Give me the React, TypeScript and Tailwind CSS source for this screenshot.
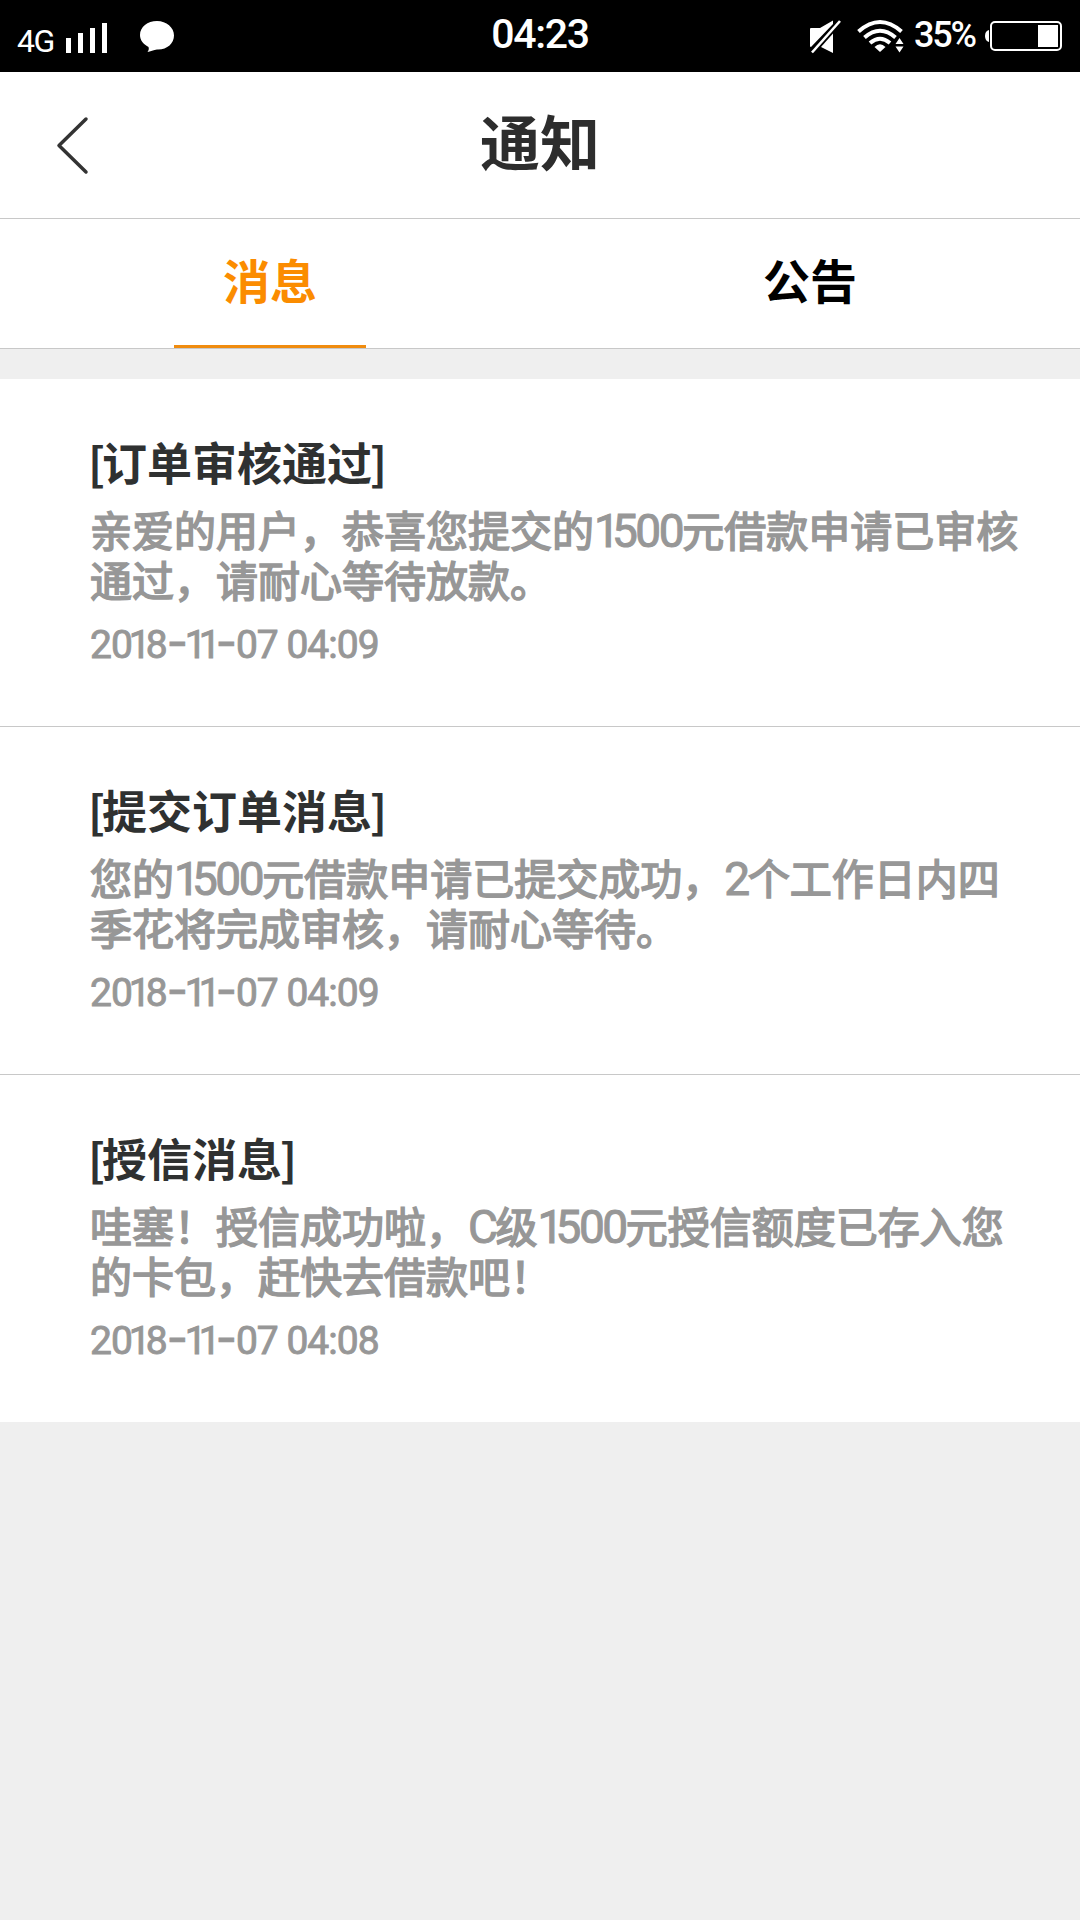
interface Notice {
  title: string;
  lines: string[];
  time: string;
}

const notices: Notice[] = [
  {
    title: '订单审核通过',
    lines: ['亲爱的用户，恭喜您提交的1500元借款申请已审核', '通过，请耐心等待放款。'],
    time: '2018-11-07 04:09',
  },
  {
    title: '提交订单消息',
    lines: ['您的1500元借款申请已提交成功，2个工作日内四', '季花将完成审核，请耐心等待。'],
    time: '2018-11-07 04:09',
  },
  {
    title: '授信消息',
    lines: ['哇塞！授信成功啦，C级1500元授信额度已存入您', '的卡包，赶快去借款吧！'],
    time: '2018-11-07 04:08',
  },
];

// Latin runs are set larger and tighter than the Chinese text around them
function MixedText({ text }: { text: string }) {
  return (
    <>
      {text.split(/([0-9A-Z]+)/).map((part, i) =>
        /^[0-9A-Z]/.test(part) ? (
          <span
            key={i}
            className="font-[Roboto] text-[46px] leading-none tracking-[-2.4px] [-webkit-text-stroke:1px_#979797]"
          >
            {part.startsWith('1') ? <span className="tracking-[-8px]">1</span> : null}
            {part.replace(/^1/, '')}
          </span>
        ) : (
          part
        )
      )}
    </>
  );
}

// The digit 1 is narrow, so the characters next to it are pulled in
function charClass(c: string, next?: string) {
  if (c === '-') {
    return next === '1'
      ? 'font-[Inter] text-[46px] leading-none tracking-[-3px]'
      : 'font-[Inter] text-[46px] leading-none';
  }
  if (c === '1') return next === '1' ? 'tracking-[-8px]' : 'tracking-[-5px]';
  if (next === '1') return 'tracking-[-4px]';
  return undefined;
}

function Timestamp({ value }: { value: string }) {
  const chars = value.split('');
  return (
    <p className="mt-[14px] h-12 whitespace-pre font-[Roboto] text-[39px] leading-[48px] tracking-[-1px] [-webkit-text-stroke:0.9px_#979797]">
      {chars.map((c, i) => (
        <span key={i} className={charClass(c, chars[i + 1])}>
          {c}
        </span>
      ))}
    </p>
  );
}

function StatusBar() {
  return (
    <div className="flex h-[72px] items-center bg-black text-white">
      <div className="flex flex-1 items-center pl-[17px]">
        <span className="mt-[10px] w-[39px] font-[Roboto] text-[32px] leading-none tracking-[-1.5px]">4G</span>
        <svg className="ml-[10px]" width="42" height="72" fill="currentColor">
          <rect x="0" y="38" width="5" height="15" />
          <rect x="12" y="33" width="5" height="20" />
          <rect x="24" y="28" width="5" height="25" />
          <rect x="36" y="23" width="5" height="30" />
        </svg>
        <svg className="ml-[32px]" width="34" height="72" fill="currentColor">
          <path d="M17 21C26.500 21 34 27.500 34 35.500S27 50 17 49.500C14 49.700 10 51.500 7.500 52C9 50 9 48.500 8.500 47C3 44 0 40 0 35C0 27 7.500 21 17 21Z" />
        </svg>
      </div>
      <span className="-mt-[3px] font-[Roboto] text-[41px] leading-none font-medium tracking-[-1.3px]">04:23</span>
      <div className="flex flex-1 items-center justify-end pr-[17px]">
        <svg width="32" height="72" viewBox="809 0 32 72" fill="currentColor">
          <path d="M810 29Q810 28 811 28H820L833 20.500V24L811 47Q810 47 810 46Z" />
          <path d="M821 47L833 33.500V53Z" />
          <path d="M812 52.500L840 21" stroke="currentColor" strokeWidth="2.600" fill="none" />
        </svg>
        <svg className="ml-[16px]" width="48" height="72" viewBox="857 0 48 72" fill="none" stroke="currentColor">
          <path d="M858.500 31.500Q880 12.500 901.500 31.500" strokeWidth="4" />
          <path d="M864.500 37.500Q880 24 895.500 37.500" strokeWidth="4" />
          <path d="M870 43Q880 34.500 890 43" strokeWidth="4" />
          <path d="M874.500 47Q880 41.500 885.500 47L880 52Z" fill="currentColor" stroke="none" />
          <path d="M895.500 44L899.500 38L903.500 44ZM895.500 46.500H903.500L899.500 52.500Z" fill="currentColor" stroke="none" />
        </svg>
        <span className="-mt-[2px] ml-[9px] w-[62px] font-[Roboto] text-[36px] leading-none font-medium tracking-[-2.2px] whitespace-nowrap">
          35%
        </span>
        <svg className="ml-[9px]" width="78" height="72" viewBox="985 0 78 72">
          <path d="M989 30V42Q985 41 985 36T989 30Z" fill="white" />
          <rect x="991" y="22" width="70" height="28" rx="4" fill="none" stroke="white" strokeWidth="2" />
          <rect x="1038" y="25" width="20" height="22" fill="white" />
        </svg>
      </div>
    </div>
  );
}

function NoticeItem({ notice }: { notice: Notice }) {
  return (
    <li className="h-[348px] border-b border-[#c8c8c8] bg-white pt-[58px] pl-[90px] last:h-[347px] last:border-b-0">
      <h2 className="h-[50px] text-[45px] leading-[50px] font-bold text-[#2f3131]">
        <span className="-ml-[2px] tracking-[-3px]">[</span>
        {notice.title}
        <span className="-ml-[2px]">]</span>
      </h2>
      <div className="text-[#979797] [-webkit-text-stroke:1.6px_#979797]">
        <div className="mt-[17px] text-[42px] whitespace-nowrap">
          {notice.lines.map((line) => (
            <p key={line} className="h-[50px] leading-[50px]">
              <MixedText text={line} />
            </p>
          ))}
        </div>
        <Timestamp value={notice.time} />
      </div>
    </li>
  );
}

export default function App() {
  return (
    <div className="min-h-[1920px] w-[1080px] overflow-hidden bg-[#efefef] font-['Noto_Sans_CJK_SC',sans-serif]">
      <StatusBar />
      <header className="grid h-[147px] grid-cols-3 items-center border-b border-[#c8c8c8] bg-white">
        <svg className="ml-[56px]" width="34" height="60" fill="none" stroke="#333" strokeWidth="3.500" strokeLinecap="round" strokeLinejoin="round">
          <path d="M30 4L3 30.500L30 57" />
        </svg>
        <h1 className="pb-[11px] text-center text-[60px] leading-[80px] font-bold text-[#2d2d2d]">通知</h1>
      </header>
      <nav className="grid h-[130px] grid-cols-2 border-b border-[#c8c8c8] bg-white text-[47px] leading-[60px] font-bold">
        <button className="mx-auto h-[129px] w-48 border-b-[3px] border-[#f08c0f] pb-[6px] text-[#fb8c00]">消息</button>
        <button className="mx-auto h-[129px] w-48 border-b-[3px] border-transparent pb-[6px] text-black">公告</button>
      </nav>
      <ul className="mt-[30px]">
        {notices.map((notice) => (
          <NoticeItem key={notice.title} notice={notice} />
        ))}
      </ul>
    </div>
  );
}
